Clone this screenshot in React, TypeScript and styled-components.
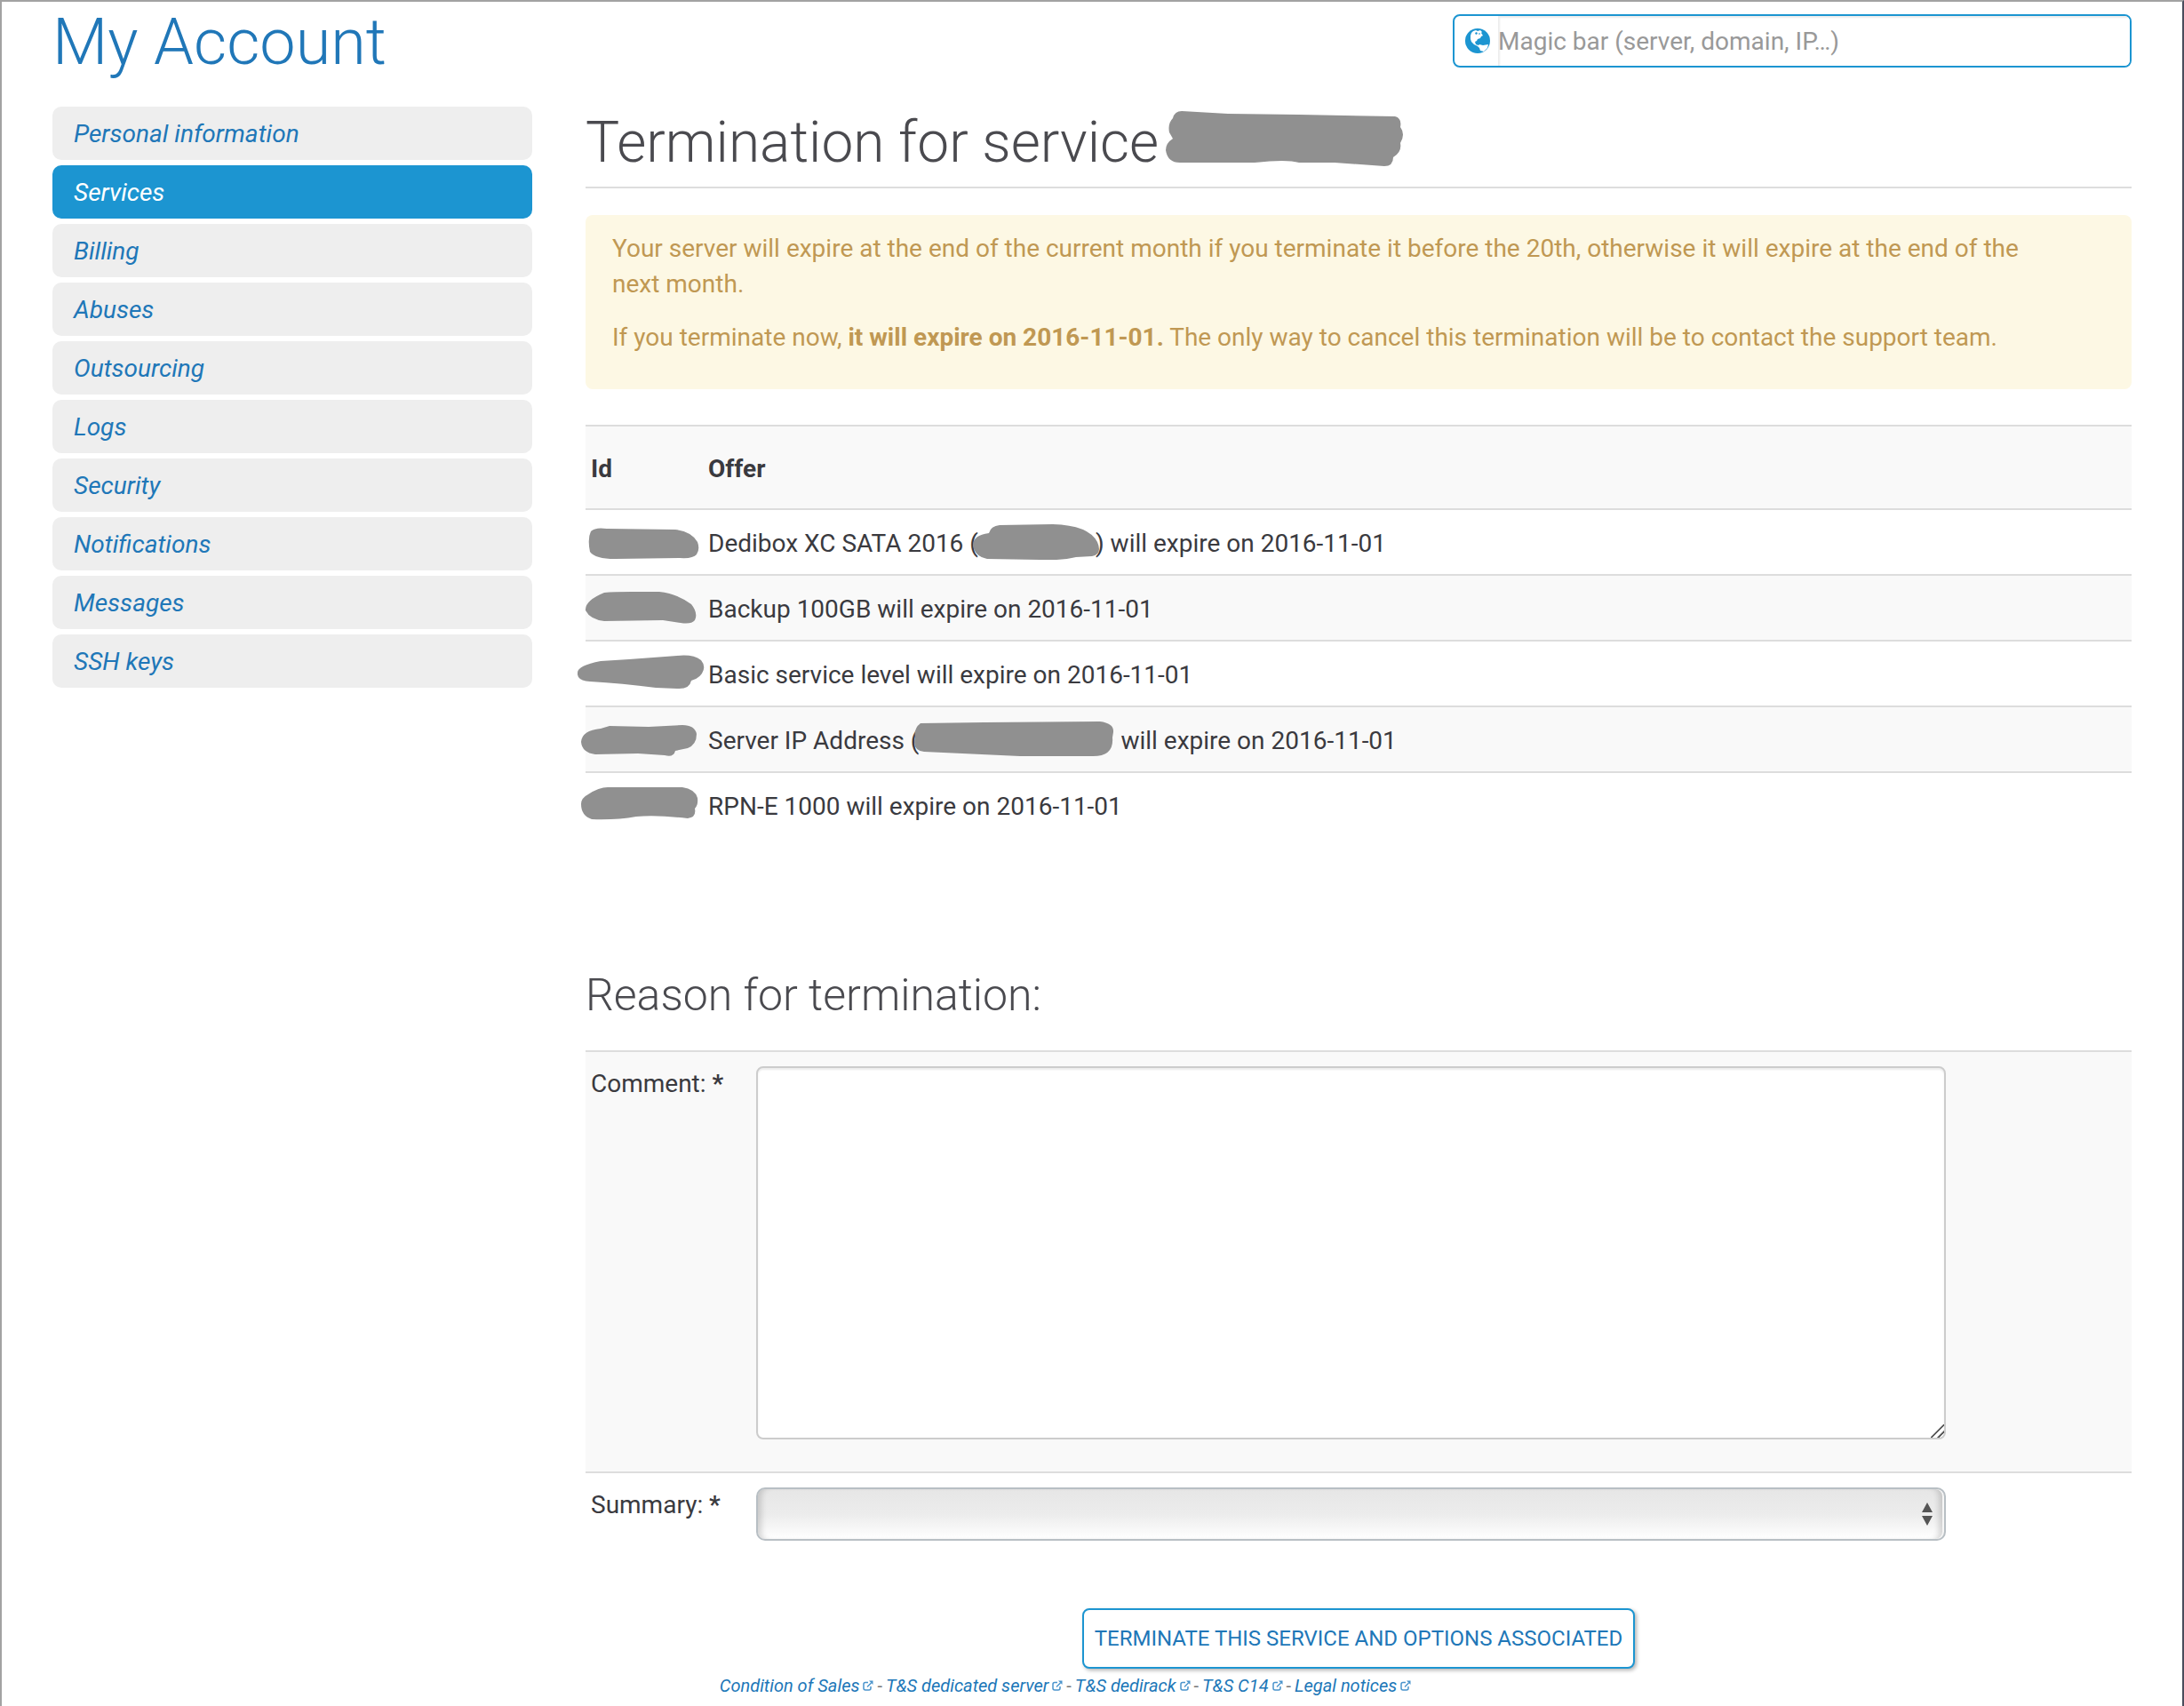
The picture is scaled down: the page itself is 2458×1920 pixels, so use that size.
import React from 'react';
import styled, { createGlobalStyle } from 'styled-components';

const Global = createGlobalStyle`
  *, *::before, *::after { box-sizing: border-box; }
  body {
    margin: 0;
    background: #fff;
    color: #3a3a3f;
    font: 28px/40px Roboto, "Liberation Sans", sans-serif;
  }
`;

const Page = styled.div`
  min-height: 100vh;
  padding: 0 57px;
  border: 2px solid #a2a2a2;
  border-bottom: 0;
  border-right-color: #4a4d5c;
`;

const Header = styled.header`
  display: flex;
  justify-content: space-between;
  align-items: flex-start;
  height: 118px;
`;

const SiteTitle = styled.h1`
  margin: 0;
  color: #2077b8;
  font-size: 72px;
  line-height: 92px;
  font-weight: 300;
`;

const MagicBar = styled.label`
  display: flex;
  align-items: center;
  width: 764px;
  height: 60px;
  margin-top: 14px;
  border: 2px solid #1c95d1;
  border-radius: 8px;
  overflow: hidden;
  svg { width: 28px; height: 28px; margin: 0 9px 0 12px; flex: none; }
`;

const MagicInput = styled.input`
  flex: 1;
  height: 100%;
  min-width: 0;
  padding: 0;
  border: 0;
  outline: 0;
  background: #fff;
  box-shadow: inset 2px 2px 2px rgba(0, 0, 0, 0.075);
  font: inherit;
  &::placeholder { color: #999; opacity: 1; }
`;

const Body = styled.div`
  display: grid;
  grid-template-columns: 540px minmax(0, 1fr);
  gap: 60px;
  align-items: start;
`;

const Menu = styled.nav`
  display: flex;
  flex-direction: column;
  gap: 6px;
`;

const MenuLink = styled.a<{ $active?: boolean }>`
  padding: 11px 24px 9px;
  border-radius: 10px;
  background: ${p => (p.$active ? '#1c95d1' : '#eee')};
  color: ${p => (p.$active ? '#fff' : '#2077b8')};
  font-style: italic;
  text-decoration: none;
`;

const PageTitle = styled.h2`
  display: flex;
  align-items: center;
  gap: 8px;
  height: 92px;
  margin: 0 0 30px;
  padding-bottom: 8px;
  border-bottom: 2px solid #ddd;
  color: #4a4a4f;
  font-size: 64px;
  font-weight: 300;
  svg { margin-bottom: 10px; }
`;

const Alert = styled.div`
  padding: 18px 110px 38px 30px;
  border-radius: 8px;
  background: #fdf8e4;
  color: #c09853;
  p { margin: 0; }
  p + p { margin-top: 20px; }
`;

const Offers = styled.table`
  width: 100%;
  margin-top: 40px;
  border-collapse: separate;
  border-spacing: 0;
  text-align: left;
  th, td { padding: 18px 6px 14px; border-top: 2px solid #ddd; }
  th { padding: 28px 6px 24px; background: #f9f9f9; font-weight: 700; }
  th:first-child { width: 132px; }
  tbody tr:nth-child(even) td { background: #f9f9f9; }
`;

const IdCell = styled.td`
  position: relative;
`;

const Scribble = styled.svg`
  fill: #909090;
  display: block;
  flex: none;
`;

const IdScribble = styled(Scribble)`
  position: absolute;
  left: -9px;
  top: 2px;
  width: 144px;
  height: 72px;
`;

const TextScribble = styled(Scribble)<{ $closed?: boolean }>`
  position: relative;
  margin: 0 ${p => (p.$closed ? -6 : 0)}px 4px -6px;
`;

const Line = styled.span`
  display: flex;
  align-items: center;
  height: 40px;
  white-space: pre;
`;

const SectionTitle = styled.h3`
  margin: 148px 0 32px;
  color: #4a4a4f;
  font-size: 50px;
  line-height: 60px;
  font-weight: 300;
`;

const FormRow = styled.div<{ $shaded?: boolean }>`
  display: grid;
  grid-template-columns: 186px minmax(0, 1fr);
  align-items: start;
  padding: 16px 12% ${p => (p.$shaded ? 36 : 16)}px 6px;
  border-top: 2px solid #ddd;
  background: ${p => (p.$shaded ? '#f9f9f9' : '#fff')};
`;

const Comment = styled.textarea`
  display: block;
  width: 100%;
  height: 420px;
  border: 2px solid #ccc;
  border-radius: 8px;
  box-shadow: inset 0 2px 2px rgba(0, 0, 0, 0.075);
  font: inherit;
  &::-webkit-resizer {
    background: linear-gradient(135deg, transparent 46%, #555 48%, #555 55%, transparent 57%, transparent 72%, #555 74%, #555 81%, transparent 83%);
  }
`;

const SelectBox = styled.div`
  display: grid;
  align-items: center;
  > * { grid-area: 1 / 1; }
  svg { justify-self: end; width: 14px; height: 26px; margin-right: 14px; pointer-events: none; }
`;

const Summary = styled.select`
  appearance: none;
  width: 100%;
  height: 60px;
  border: 2px solid #b8bfc4;
  border-radius: 10px;
  background: linear-gradient(#e6e6e6, #ececec 50%, #fff);
  box-shadow: inset -2px 0 0 #f6f6f6, inset 8px 0 6px -4px rgba(0, 0, 0, 0.15), inset -10px 0 6px -4px rgba(0, 0, 0, 0.15);
  font: inherit;
`;

const FormLabel = styled.label`
  b { font-weight: 700; }
`;

const Actions = styled.div`
  display: flex;
  justify-content: center;
  margin-top: 60px;
`;

const Terminate = styled.button`
  height: 68px;
  padding: 0 12px;
  border: 2px solid #1c95d1;
  border-radius: 8px;
  background: #fff;
  box-shadow: 2px 2px 4px rgba(0, 0, 0, 0.3);
  color: #2077b8;
  font: 24px/40px Roboto, "Liberation Sans", sans-serif;
  text-transform: uppercase;
`;

const Footer = styled.footer`
  display: flex;
  justify-content: center;
  gap: 4px;
  padding: 4px 60px 0 0;
  font-size: 20px;
  line-height: 30px;
  color: #777;
  a { display: flex; align-items: center; gap: 4px; color: #2077b8; font-style: italic; text-decoration: none; }
  svg { width: 12px; height: 12px; }
`;

const menu = ['Personal information', 'Services', 'Billing', 'Abuses', 'Outsourcing', 'Logs', 'Security', 'Notifications', 'Messages', 'SSH keys'];
const legal = ['Condition of Sales', 'T&S dedicated server', 'T&S dedirack', 'T&S C14', 'Legal notices'];

const idMarks = [
  'M15 22 Q20 17 33 19 L110 20 Q128 22 135 34 Q138 42 134 48 Q130 53 115 52 L42 53 Q20 53 14 45 Q11 30 15 22Z',
  'M30 17 Q40 16 60 16 L92 16 Q112 18 128 30 Q136 40 132 48 Q128 53 116 51 L96 48 L30 49 Q14 47 9 37 Q8 26 30 17Z',
  'M26 20 L58 18 L112 14 Q130 12 139 19 Q145 26 140 34 Q136 40 128 42 Q126 52 112 51 L88 50 Q50 45 14 43 Q-1 42 0 33 Q0 25 26 20Z',
  'M26 22 L36 19 L80 20 L118 18 Q132 18 134 28 Q134 40 124 44 L110 47 Q108 55 98 52 L68 50 L20 51 Q5 49 4 37 Q5 24 26 22Z',
  'M12 22 Q24 14 34 14 L118 14 Q132 16 135 26 Q136 34 132 38 Q134 48 124 49 Q90 45 66 47 Q44 51 16 50 Q4 46 4 33 Q4 26 12 22Z',
];

const Globe = () => (
  <svg viewBox="0 0 28 28" aria-hidden="true">
    <circle cx="14" cy="14" r="14" fill="#1c95d1" />
    <path fill="#fff" d="M9 3l3-1 2 1 3-1 2 2-1 1 2 3-2 1-1 2-3 1-1 2-2 1 1 3 3 1-1 1-4-2-3-3-1-3V8l1-3zM14 20l2-2 4 1 6-1-1 4-4 4-4-1-1-3z" />
    <path fill="#1c95d1" d="M12 4l2 1-1 2-2-1zM16 5l1 1-1 1-1-1z" />
  </svg>
);

const External = () => (
  <svg viewBox="0 0 12 12" fill="none" stroke="#4a94cc" strokeWidth="1.5" aria-hidden="true">
    <path d="M6 2.5H3Q1 2.5 1 4.500V9Q1 11 3 11H7Q9 11 9 9V7" />
    <path d="M5 7.500L9.500 3" />
    <path d="M7 .5h4.500V5z" fill="#4a94cc" stroke="none" />
  </svg>
);

export default function App() {
  return (
    <>
      <Global />
      <Page>
        <Header>
          <SiteTitle>My Account</SiteTitle>
          <MagicBar>
            <Globe />
            <MagicInput aria-label="Magic bar" placeholder="Magic bar (server, domain, IP…)" />
          </MagicBar>
        </Header>
        <Body>
          <Menu>
            {menu.map(m => <MenuLink key={m} href="#" $active={m === 'Services'}>{m}</MenuLink>)}
          </Menu>
          <main>
            <PageTitle>
              Termination for service
              <Scribble width="268" height="62" viewBox="0 0 268 62">
                <path d="M18 0 Q10 0 8 8 Q2 14 4 24 L8 31 Q0 36 0 44 Q2 58 16 58 L100 58 Q136 54 150 58 L190 58 L246 62 Q256 62 256 52 Q266 46 264 36 Q270 26 264 18 Q266 8 258 6 L150 4 L70 3Z" />
              </Scribble>
            </PageTitle>
            <Alert>
              <p>Your server will expire at the end of the current month if you terminate it before the 20th, otherwise it will expire at the end of the next month.</p>
              <p>If you terminate now, <strong>it will expire on 2016-11-01.</strong> The only way to cancel this termination will be to contact the support team.</p>
            </Alert>
            <Offers>
              <thead><tr><th>Id</th><th>Offer</th></tr></thead>
              <tbody>
                {[
                  <>Dedibox XC SATA 2016 (<TextScribble $closed width="144" height="40" viewBox="0 0 144 40"><path d="M18 10 Q20 2 30 1 L90 0 Q130 1 140 20 Q146 34 134 36 L116 37 Q100 41 76 40 L16 39 Q2 36 0 24 Q0 12 18 10Z" /></TextScribble>) will expire on 2016-11-01</>,
                  'Backup 100GB will expire on 2016-11-01',
                  'Basic service level will expire on 2016-11-01',
                  <>Server IP Address (<TextScribble width="226" height="40" viewBox="0 0 226 40"><path d="M8 2 L80 1 L210 0 Q226 2 225 12 L224 18 Q226 40 200 39 L120 39 L12 34 Q-2 32 2 18 Q0 8 8 2Z" /></TextScribble> will expire on 2016-11-01</>,
                  'RPN-E 1000 will expire on 2016-11-01',
                ].map((text, i) => (
                  <tr key={i}>
                    <IdCell><IdScribble viewBox="0 0 144 72"><path d={idMarks[i]} /></IdScribble></IdCell>
                    <td><Line>{text}</Line></td>
                  </tr>
                ))}
              </tbody>
            </Offers>
            <SectionTitle>Reason for termination:</SectionTitle>
            <form onSubmit={e => e.preventDefault()}>
              <FormRow $shaded>
                <FormLabel htmlFor="comment">Comment: <b>*</b></FormLabel>
                <Comment id="comment" />
              </FormRow>
              <FormRow>
                <FormLabel htmlFor="summary">Summary: <b>*</b></FormLabel>
                <SelectBox>
                  <Summary id="summary" />
                  <svg viewBox="0 0 14 26" fill="#555" aria-hidden="true"><path d="M7 0l6 11H1zM7 26l6-11H1z" /></svg>
                </SelectBox>
              </FormRow>
              <Actions><Terminate type="submit">Terminate this service and options associated</Terminate></Actions>
            </form>
          </main>
        </Body>
        <Footer>
          {legal.map((l, i) => (
            <React.Fragment key={l}>
              {i > 0 && <span>-</span>}
              <a href="#">{l}<External /></a>
            </React.Fragment>
          ))}
        </Footer>
      </Page>
    </>
  );
}
